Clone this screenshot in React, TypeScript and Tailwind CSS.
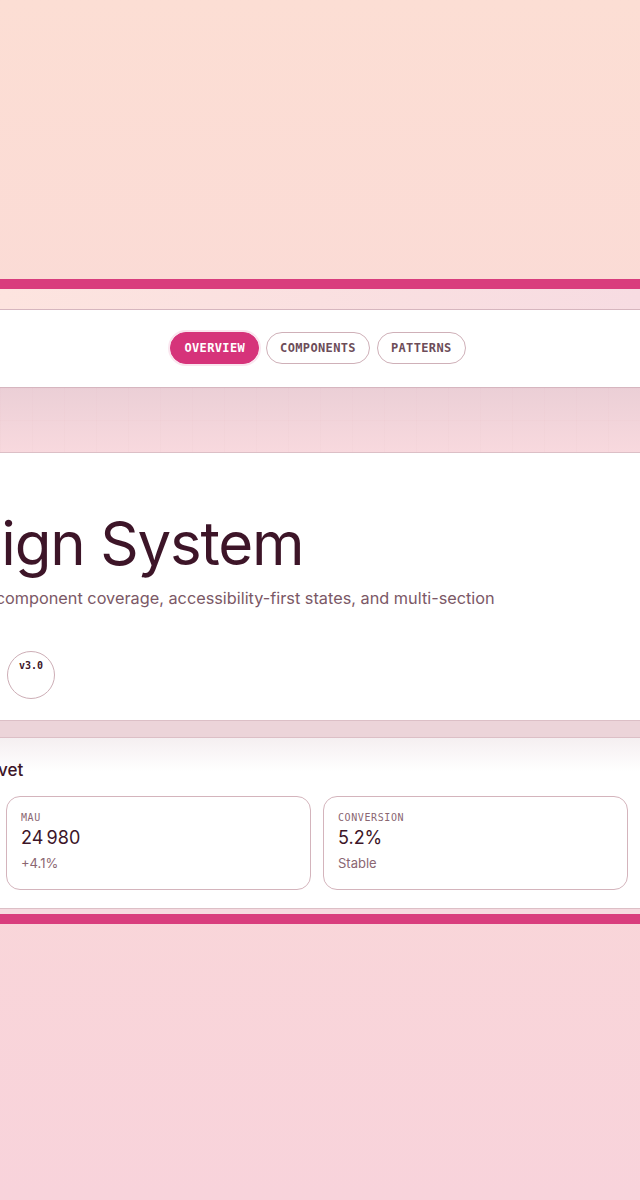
import type { ReactNode } from "react";

const MONO = "font-['DejaVu_Sans_Mono','Liberation_Mono',monospace]";

function Band({ className, children }: { className: string; children?: ReactNode }) {
  return (
    <div className={className}>
      <div className="flex justify-center">
        <div className="w-[1256px] shrink-0 mr-[6px]">{children}</div>
      </div>
    </div>
  );
}

const tabs = [
  { label: "OVERVIEW", active: true },
  { label: "COMPONENTS", active: false },
  { label: "PATTERNS", active: false },
];

const badges = ["a11y", "rtl", "v3.0"];

const metrics = [
  { label: "MAU", value: "24\u202F980", note: "+4.1%" },
  { label: "CONVERSION", value: "5.2%", note: "Stable" },
];

export default function App() {
  return (
    <div className="min-h-screen w-full overflow-hidden bg-gradient-to-b from-[#fcded4] to-[#f8d3db] flex flex-col justify-center pt-[2px] font-['Inter',sans-serif]">
      <div className="border-y-[10px] border-[#d93d7d]">
        <div className="h-5 bg-gradient-to-r from-[#fde4df] to-[#f7dce2]" />

        <Band className="h-[79px] border-y border-[#d6b6bf] bg-white">
          <nav className="flex h-[77px] items-center justify-center gap-[7px] pl-[2px]">
            {tabs.map((t) => (
              <span
                key={t.label}
                className={
                  t.active
                    ? `${MONO} flex h-8 items-center rounded-full border border-[#d6337a] bg-[#d6337a] px-[13px] text-[12px] font-bold tracking-[0.03em] text-white shadow-[0_0_0_2px_rgba(214,51,122,0.12)]`
                    : `${MONO} flex h-8 items-center rounded-full border border-[#cfb0b8] bg-white px-[13px] text-[12px] font-bold tracking-[0.03em] text-[#6d4d59]`
                }
              >
                {t.label}
              </span>
            ))}
          </nav>
        </Band>

        <div className="h-16 bg-[linear-gradient(rgba(205,150,165,0.04)_1px,transparent_1px),linear-gradient(90deg,rgba(205,150,165,0.04)_1px,transparent_1px),linear-gradient(to_bottom,#ebcfd6,#f8d9de)] [background-size:32px_32px,32px_32px,100%_100%]" />

        <Band className="h-[269px] border-y border-[#dcbfc6] bg-white">
          <div className="pl-[206px] pt-[54px]">
            <h1 className="whitespace-nowrap text-[60px] font-normal leading-[72px] tracking-[-0.02em] text-[#3d1528]">
              Design System
            </h1>
            <p className="ml-[8px] mt-[7px] whitespace-nowrap text-[16.3px] leading-6 text-[#7b5866]">
              Tokens, full component coverage, accessibility-first states, and multi-section
            </p>
            <div className="mt-[41px] flex gap-2">
              {badges.map((b) => (
                <span
                  key={b}
                  className={`${MONO} flex h-12 w-12 justify-center rounded-full border border-[#cdaeb6] pt-[6px] text-[10px] font-bold text-[#3d1528]`}
                >
                  {b}
                </span>
              ))}
            </div>
          </div>
        </Band>

        <div className="h-4 bg-[#ecd4d9]" />

        <Band className="h-[172px] border-y border-[#dcbfc6] bg-gradient-to-b from-[#f5eff1] via-white via-20% to-white">
          <div className="pt-[20px]">
            <h2 className="pl-[208px] text-[17px] font-medium leading-6 text-[#3d1528]">
              Metrics · Velvet
            </h2>
            <div className="mt-[14px] grid grid-cols-[305px_305px] justify-center gap-3">
              {metrics.map((m) => (
                <div key={m.label} className="h-[94px] rounded-[14px] border border-[#d4b4bc] bg-white px-[14px] pt-[13px]">
                  <div className={`${MONO} text-[10px] leading-4 tracking-[0.06em] text-[#8a6672]`}>{m.label}</div>
                  <div className="text-[18px] leading-6 text-[#3d1528]">{m.value}</div>
                  <div className="mt-[3px] text-[13px] leading-5 text-[#8a6672]">{m.note}</div>
                </div>
              ))}
            </div>
          </div>
        </Band>

        <div className="h-[5px] bg-[#f6dae0]" />
      </div>
    </div>
  );
}
